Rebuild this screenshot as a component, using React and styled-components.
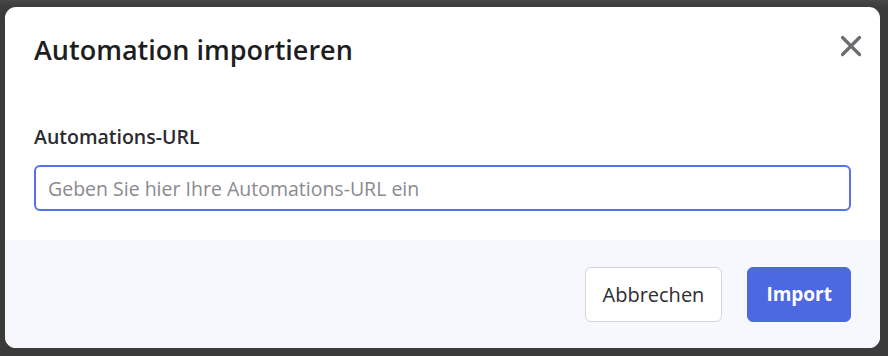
import React from "react";
import styled, { createGlobalStyle } from "styled-components";

const GlobalStyle = createGlobalStyle`
  html, body {
    margin: 0;
    padding: 0;
    background: #3d3d3d;
  }
  * {
    box-sizing: border-box;
  }
`;

const Overlay = styled.div`
  width: 888px;
  height: 356px;
  padding: 7px 8px 8px 5px;
  background: linear-gradient(180deg, #474747 0px, #3b3b3b 8px, #3b3b3b 100%);
  font-family: "Open Sans", "Noto Sans", sans-serif;
`;

const Dialog = styled.div`
  height: 100%;
  display: flex;
  flex-direction: column;
  background: #ffffff;
  border-radius: 11px;
  overflow: hidden;
`;

const Header = styled.div`
  display: flex;
  align-items: flex-start;
  justify-content: space-between;
  padding: 26px 18px 0 29px;
`;

const Title = styled.h2`
  margin: 0;
  font-size: 27px;
  line-height: 34px;
  font-weight: 600;
  color: #1d1d22;
`;

const CloseButton = styled.button`
  width: 22px;
  height: 26px;
  border: none;
  background: none;
  padding: 0;
  display: flex;
  align-items: center;
  justify-content: center;
  cursor: pointer;
`;

const Body = styled.div`
  flex: 1;
  padding: 58px 29px 0 29px;
`;

const Label = styled.label`
  display: block;
  font-size: 19.5px;
  line-height: 24px;
  font-weight: 600;
  color: #2b2b30;
  margin-bottom: 16px;
`;

const Input = styled.input`
  display: block;
  width: 100%;
  height: 46px;
  border: 2px solid #5671ec;
  border-radius: 6px;
  padding: 0 12px;
  font-family: inherit;
  font-size: 19.5px;
  color: #333;
  outline: none;
  &::placeholder {
    color: #8a8a90;
  }
`;

const Footer = styled.div`
  height: 108px;
  display: flex;
  align-items: center;
  justify-content: flex-end;
  gap: 25px;
  padding: 0 29px;
  background: #f7f8fd;
`;

const Button = styled.button`
  height: 55px;
  padding: 0 ${(p) => (p.$primary ? "18px" : "17px")};
  border-radius: 6px;
  font-family: inherit;
  font-size: ${(p) => (p.$primary ? "19px" : "20px")};
  font-weight: ${(p) => (p.$primary ? 700 : 500)};
  cursor: pointer;
  border: 1px solid ${(p) => (p.$primary ? "#4d69e2" : "#d3d4dc")};
  background: ${(p) => (p.$primary ? "#4d69e2" : "#ffffff")};
  color: ${(p) => (p.$primary ? "#ffffff" : "#2e2e33")};
`;

const CloseIcon = () => (
  <svg width="22" height="22" viewBox="0 0 22 22">
    <path
      d="M2.5 2.5 L19.5 19.5 M19.5 2.5 L2.5 19.5"
      stroke="#6b6b70"
      strokeWidth="3.2"
      strokeLinecap="round"
    />
  </svg>
);

export default function App() {
  return (
    <>
      <GlobalStyle />
      <Overlay>
        <Dialog>
          <Header>
            <Title>Automation importieren</Title>
            <CloseButton aria-label="close">
              <CloseIcon />
            </CloseButton>
          </Header>
          <Body>
            <Label htmlFor="url">Automations-URL</Label>
            <Input id="url" placeholder="Geben Sie hier Ihre Automations-URL ein" autoFocus />
          </Body>
          <Footer>
            <Button>Abbrechen</Button>
            <Button $primary>Import</Button>
          </Footer>
        </Dialog>
      </Overlay>
    </>
  );
}
